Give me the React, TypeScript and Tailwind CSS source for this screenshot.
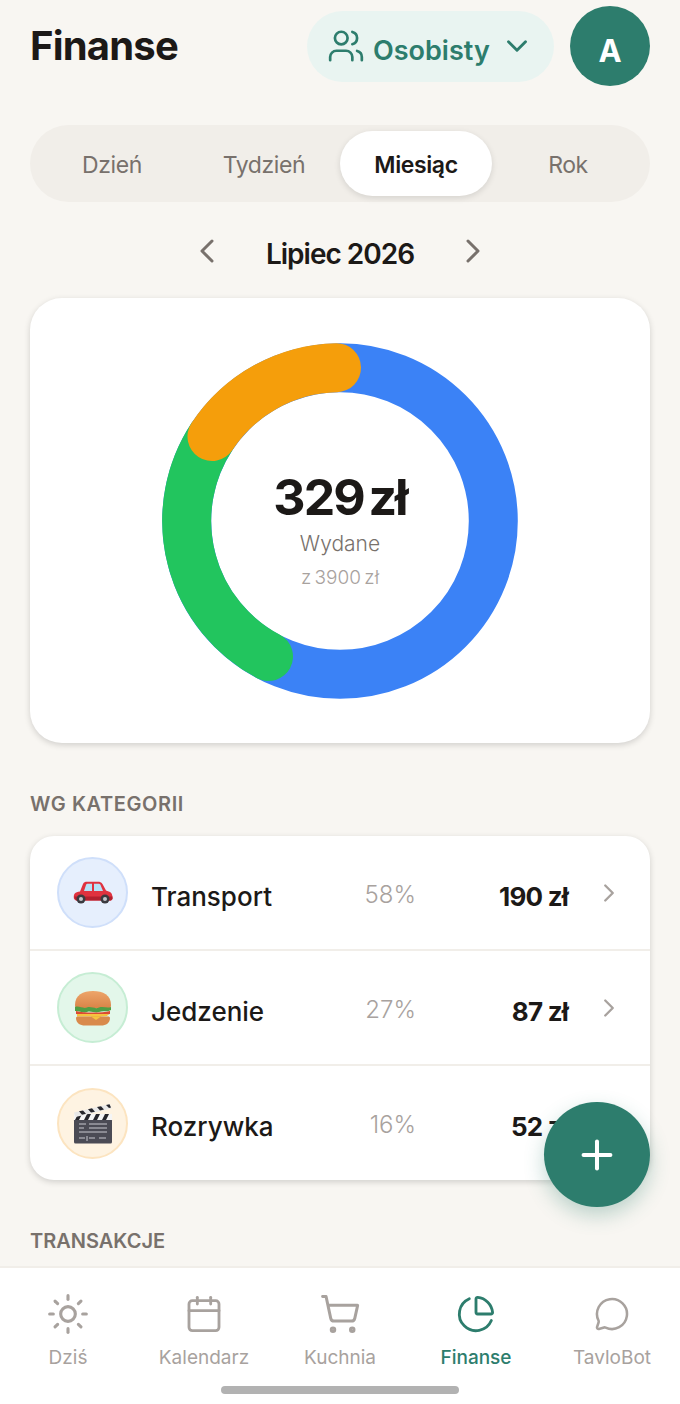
import React from "react";
import { Users, ChevronDown, ChevronLeft, ChevronRight, Sun, Calendar, ShoppingCart, ChartPie, MessageCircle, Plus } from "lucide-react";

const CarIcon = () => (
  <svg width="40" height="23" viewBox="0 0 40 23">
    <path d="M1 18 C0 13 2 11 7 10.500 L10 3 C11 1 12 .7 14 .7 L25 .7 C27 .7 28 1 29.500 3 L33 9.500 L37 11 C39 12 39.500 14 39.500 18 L38 19.500 L3 19.500 Z" fill="#e0323f" />
    <path d="M1 15.500 L39.500 15.500 L39.500 18 L38 19.500 L3 19.500 Z" fill="#b3202e" />
    <path d="M11 10 L13 4 C13.400 3 14 2.800 15 2.800 L19 2.800 L19 10 Z" fill="#b5e3f8" />
    <path d="M21 2.800 L25 2.800 C26.500 2.800 27 3 27.500 4 L30 10 L21 10 Z" fill="#b5e3f8" />
    <circle cx="8" cy="18" r="4.500" fill="#3b3b40" /><circle cx="8" cy="18" r="2" fill="#c4c6cc" />
    <circle cx="32" cy="18" r="4.500" fill="#3b3b40" /><circle cx="32" cy="18" r="2" fill="#c4c6cc" />
  </svg>
);

const BurgerIcon = () => (
  <svg width="38" height="36" viewBox="0 0 38 36">
    <defs>
      <linearGradient id="bun" x1="0" y1="0" x2="0" y2="1">
        <stop offset="0" stopColor="#eda56a" />
        <stop offset="1" stopColor="#d98347" />
      </linearGradient>
    </defs>
    <path d="M1 15 C1 5 9 1 19 1 C29 1 37 5 37 15 C37 18 36 18.500 34 18.500 L4 18.500 C2 18.500 1 18 1 15 Z" fill="url(#bun)" />
    <path d="M1 17 C5 15.500 9 19 13 17.500 C17 16 21 19.500 25 17.500 C29 16 33 18.500 37 17 L37 20 C33 22.500 29 20 25 22 C21 23.500 17 20.500 13 22 C9 23.500 5 20.500 1 21 Z" fill="#4f9e44" />
    <path d="M2 21 C10 23 28 23 36 21 L36 24 C28 25.500 10 25.500 2 24 Z" fill="#dc4b32" />
    <path d="M3 24 L35 24 L33 26 L27 26.500 L22 30 L17 26.500 L3 26.500 Z" fill="#f6c33f" />
    <path d="M2 28 C2 27 3 26.500 4 26.500 L34 26.500 C35 26.500 36 27 36 28 C36 33 32 35.500 27 35.500 L11 35.500 C6 35.500 2 33 2 28 Z" fill="#d98a4c" />
    <path d="M17 26.500 L22 30 L27 26.500 Z" fill="#f6c33f" />
  </svg>
);

const ClapperIcon = () => (
  <svg width="40" height="41" viewBox="0 0 40 41">
    <rect x="1" y="16" width="38" height="24.500" rx="1.500" fill="#4b4b55" />
    <rect x="1" y="11" width="38" height="6" fill="#f5f5f5" />
    <path d="M5 11 L9 11 L6 17 L2 17 Z M14 11 L18 11 L15 17 L11 17 Z M23 11 L27 11 L24 17 L20 17 Z M32 11 L36 11 L33 17 L29 17 Z" fill="#26262c" />
    <path d="M1 9.500 L37 1 L38.500 5.500 L2.500 14 Z" fill="#e8e8e8" />
    <path d="M6 8.300 L10 7.400 L13 10.800 L9 11.700 Z M15 6.200 L19 5.300 L22 8.700 L18 9.600 Z M24 4.100 L28 3.200 L31 6.600 L27 7.500 Z M33 2 L36.500 1.200 L38 4.600 L36 5 Z" fill="#26262c" />
    <path d="M6 21 H13 M16 21 H34 M6 25 H11 M16 25 H34 M6 29 H34 M6 35 H12 M16 35 H22 M26 35 H33" stroke="#c9c9d0" strokeWidth="1" />
    <path d="M14 33 V38" stroke="#c9c9d0" strokeWidth="1" />
  </svg>
);

const rows = [
  { name: "Transport", pct: "58%", amt: "190 zł", ring: "bg-[#e6effd] border-[#cfdffa]", icon: <CarIcon /> },
  { name: "Jedzenie", pct: "27%", amt: "87 zł", ring: "bg-[#e3f7ea] border-[#c6edd4]", icon: <BurgerIcon /> },
  { name: "Rozrywka", pct: "16%", amt: "52 zł", ring: "bg-[#fef3e2] border-[#fce4c0]", icon: <ClapperIcon /> },
];

const nav = [
  { label: "Dziś", Icon: Sun, size: 44 },
  { label: "Kalendarz", Icon: Calendar, size: 40 },
  { label: "Kuchnia", Icon: ShoppingCart, size: 42 },
  { label: "Finanse", Icon: ChartPie, size: 40, active: true },
  { label: "TavloBot", Icon: MessageCircle, size: 36 },
];

export default function App() {
  return (
    <div className="relative flex h-[1404px] w-[680px] flex-col overflow-hidden bg-[#f8f6f2] font-['Inter','Liberation_Sans',sans-serif] text-[#1c1917]">
      <main className="min-h-0 flex-1 overflow-hidden px-[30px] pt-[6px]">
        <header className="flex h-[80px] items-center">
          <h1 className="flex-1 text-[40px] font-bold leading-none tracking-[-0.8px]">Finanse</h1>
          <button className="flex h-[71px] w-[247px] items-center rounded-full bg-[#e9f4f1] pl-[20px] text-[#2d7d6d]">
            <Users size={38} strokeWidth={1.7} />
            <span className="ml-[8px] pt-[8px] text-[27px] font-semibold leading-none">Osobisty</span>
            <ChevronDown size={34} strokeWidth={2} className="ml-[10px] -mt-[1px]" />
          </button>
          <div className="ml-[16px] flex h-[80px] w-[80px] items-center justify-center rounded-full bg-[#2d7d6d] pt-[8px] text-[31px] font-bold leading-none text-white">A</div>
        </header>

        <div className="mt-[39px] grid h-[77px] grid-cols-4 rounded-full bg-[#f1eee9] p-[6px] text-[23px] leading-none tracking-[-0.4px] text-[#78716c]">
          <div className="flex items-center justify-center pt-[4px]">Dzień</div>
          <div className="flex items-center justify-center pt-[4px]">Tydzień</div>
          <div className="flex items-center justify-center rounded-full bg-white pt-[4px] font-semibold text-[#1c1917] shadow-[0_2px_6px_rgba(0,0,0,0.12)]">Miesiąc</div>
          <div className="flex items-center justify-center pt-[4px]">Rok</div>
        </div>

        <div className="mt-[30px] flex h-[40px] items-center justify-center">
          <ChevronLeft size={40} strokeWidth={1.8} className="-mt-[2px] text-[#78716c]" />
          <div className="w-[226px] pt-[4px] text-center text-[28px] font-semibold leading-none tracking-[-1px]">Lipiec 2026</div>
          <ChevronRight size={40} strokeWidth={1.8} className="-mt-[2px] text-[#78716c]" />
        </div>

        <section className="mt-[26px] grid h-[445px] place-items-center rounded-[32px] bg-white shadow-[0_2px_6px_rgba(0,0,0,0.16)]">
          <svg width="356" height="356" viewBox="0 0 356 356" className="col-start-1 row-start-1" fill="none" strokeWidth="49">
            <circle cx="178" cy="178" r="153.300" stroke="#3b82f6" />
            <path d="M106.500 313.500 A153.300 153.300 0 0 1 50 93.500" stroke="#22c55e" strokeLinecap="round" />
            <path d="M50 93.500 A153.300 153.300 0 0 1 174.500 24.700" stroke="#f59e0b" strokeLinecap="round" />
          </svg>
          <div className="col-start-1 row-start-1 flex flex-col items-center pt-[14px]">
            <div className="text-[50px] font-bold leading-[60px] tracking-[-2px] [word-spacing:-5px]">329 zł</div>
            <div className="mt-[3px] text-[21px] font-light leading-[28px] text-[#78716c]">Wydane</div>
            <div className="mt-[9px] text-[19px] font-light leading-[22px] text-[#a8a29e] [word-spacing:-2px]">z 3900 zł</div>
          </div>
        </section>

        <h2 className="mt-[49px] text-[20px] font-semibold leading-[24px] tracking-[0.6px] text-[#78716c]">WG KATEGORII</h2>

        <section className="mt-[20px] rounded-[24px] bg-white shadow-[0_2px_6px_rgba(0,0,0,0.16)]">
          {rows.map((r, i) => (
            <div key={r.name} className={`flex items-center pl-[27px] pr-[22px] ${i < 2 ? "h-[115px] border-b-2 border-[#f1eee9]" : "h-[114px]"}`}>
              <div className={`flex h-[71px] w-[71px] items-center justify-center rounded-full border-2 ${r.ring}`}>{r.icon}</div>
              <div className="ml-[23px] flex-1 pt-[8px] text-[26px] font-medium leading-none">{r.name}</div>
              <div className="w-[80px] pt-[4px] text-right text-[24px] font-light leading-none text-[#a8a29e]">{r.pct}</div>
              <div className="w-[152px] pt-[8px] text-right text-[26px] font-bold leading-none tracking-[-0.8px]">{r.amt}</div>
              <div className="ml-[26px] w-[34px] text-[#a8a29e]"><ChevronRight size={30} strokeWidth={1.9} /></div>
            </div>
          ))}
        </section>

        <h2 className="mt-[49px] text-[20px] font-semibold leading-[24px] tracking-[0px] text-[#78716c]">TRANSAKCJE</h2>
      </main>

      <nav className="h-[138px] shrink-0 border-t-2 border-[#f1eee9] bg-white pt-[25px]">
        <div className="grid grid-cols-5">
          {nav.map(({ label, Icon, active, size }) => (
            <div key={label} className={`flex flex-col items-center ${active ? "text-[#2d7d6d]" : "text-[#a8a29e]"}`}>
              <div className="flex h-[42px] items-center justify-center"><Icon size={size} strokeWidth={1.7} /></div>
              <span className={`mt-[11px] text-[19px] leading-[24px] ${active ? "font-medium" : "font-normal"}`}>{label}</span>
            </div>
          ))}
        </div>
        <div className="mx-auto mt-[16px] h-[8px] w-[238px] rounded-full bg-[#b2b2b2]" />
      </nav>

      <button className="absolute bottom-[197px] right-[30px] flex h-[105px] w-[106px] items-center justify-center rounded-full bg-[#2d7d6d] text-white shadow-[0_8px_20px_rgba(45,125,109,0.3)]">
        <Plus size={46} strokeWidth={2.1} />
      </button>
    </div>
  );
}
